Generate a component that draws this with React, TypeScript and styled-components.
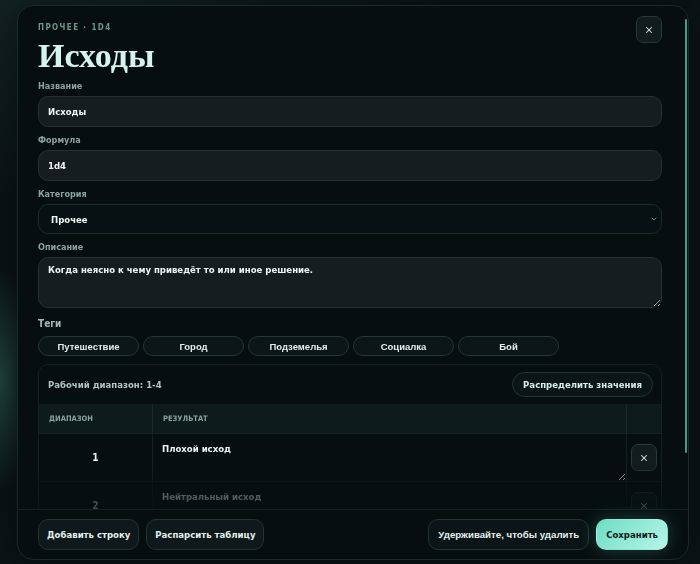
import styled, { createGlobalStyle } from "styled-components";
import { X, ChevronDown } from "lucide-react";

const GlobalStyle = createGlobalStyle`
  * { box-sizing: border-box; }
  body {
    margin: 0;
    background: #0b1315;
    font-family: "DejaVu Sans Condensed", "DejaVu Sans", sans-serif;
  }
`;

const Page = styled.div`
  width: 700px;
  height: 564px;
  padding: 5px 11px 4px 17px;
  background:
    radial-gradient(ellipse 40px 110px at 0px 380px, rgba(52, 110, 96, 0.55), transparent),
    radial-gradient(ellipse 400px 200px at 60px 0px, rgba(30, 52, 50, 0.5), transparent),
    #0b1416;
  overflow: hidden;
`;

const Modal = styled.div`
  height: 555px;
  display: flex;
  flex-direction: column;
  border: 1px solid #1a2a29;
  border-radius: 16px;
  background: #060e10;
  box-shadow: 0 0 40px rgba(0, 0, 0, 0.5);
  overflow: hidden;
`;

const ScrollArea = styled.div`
  position: relative;
  flex: 1;
  overflow: hidden;
  padding: 10px 26px 0 20px;
  -webkit-mask-image: linear-gradient(to bottom, #000 calc(100% - 44px), rgba(0,0,0,0.45) 100%);
  mask-image: linear-gradient(to bottom, #000 calc(100% - 44px), rgba(0,0,0,0.45) 100%);
`;

const ScrollThumb = styled.div`
  position: absolute;
  top: 13px;
  right: 1px;
  width: 2px;
  height: 434px;
  border-radius: 2px;
  background: #3f9d88;
`;

const Header = styled.div`
  display: flex;
  justify-content: space-between;
  align-items: flex-start;
`;

const Eyebrow = styled.div`
  margin-top: 7px;
  font-size: 8px;
  line-height: 10px;
  font-weight: 700;
  letter-spacing: 1.4px;
  color: #6f968d;
`;

const Title = styled.h1`
  margin: 3px 0 0;
  font-family: "Liberation Serif", "DejaVu Serif", serif;
  font-weight: 700;
  font-size: 34px;
  line-height: 40px;
  color: #d6f3ec;
`;

const IconButton = styled.button`
  width: 26px;
  height: 27px;
  display: flex;
  align-items: center;
  justify-content: center;
  padding: 0;
  border-radius: 7px;
  border: 1px solid #25393a;
  background: #121b1d;
  color: #d9ece7;
`;

const Form = styled.div`
  display: flex;
  flex-direction: column;
  gap: 7px;
  margin-top: 4px;
`;

const Field = styled.div<{ $gapTop?: boolean }>`
  display: flex;
  flex-direction: column;
  margin-top: ${(p) => (p.$gapTop ? "3px" : "0")};
`;

const Label = styled.label<{ $big?: boolean }>`
  font-size: ${(p) => (p.$big ? "10px" : "9px")};
  line-height: 12px;
  font-weight: 700;
  color: ${(p) => (p.$big ? "#a5b9b4" : "#8aa49d")};
  margin-bottom: ${(p) => (p.$big ? "6px" : "4px")};
`;

const TextInput = styled.input`
  height: 31px;
  padding: 0 9px;
  border-radius: 10px;
  border: 1px solid #21322f;
  background: #161d1f;
  color: #eef6f3;
  font-family: inherit;
  font-weight: 700;
  font-size: 9.5px;
  outline: none;
`;

const SelectBox = styled.div`
  height: 30px;
  display: flex;
  align-items: center;
  justify-content: space-between;
  padding: 0 3px 0 12px;
  border-radius: 10px;
  border: 1px solid #1b2c2a;
  background: #071012;
  color: #eef6f3;
  font-weight: 700;
  font-size: 9.5px;
`;

const TextArea = styled.textarea`
  height: 51px;
  padding: 6px 9px;
  border-radius: 10px;
  border: 1px solid #21322f;
  background: #161d1f;
  color: #eef6f3;
  font-family: inherit;
  font-weight: 700;
  font-size: 9.5px;
  outline: none;
  resize: vertical;
`;

const Tags = styled.div`
  display: flex;
  gap: 4px;
`;

const Tag = styled.button`
  width: 101px;
  height: 20px;
  padding: 0;
  border-radius: 10px;
  border: 1px solid #213834;
  background: #0c1618;
  color: #e4eeeb;
  font-family: "Liberation Sans", Arial, sans-serif;
  font-weight: 700;
  font-size: 9.5px;
`;

const TablePanel = styled.div`
  margin-top: 1px;
  border: 1px solid #13221f;
  border-radius: 10px;
  overflow: hidden;
`;

const PanelHead = styled.div`
  height: 39px;
  display: flex;
  align-items: center;
  justify-content: space-between;
  padding: 0 8px 0 9px;
`;

const PanelTitle = styled.div`
  font-size: 9.5px;
  font-weight: 700;
  color: #b0c5bf;
`;

const PillButton = styled.button`
  height: 25px;
  padding: 0 10px;
  border-radius: 13px;
  border: 1px solid #223734;
  background: #0b1517;
  color: #d6eee8;
  font-family: inherit;
  font-weight: 700;
  font-size: 9.5px;
`;

const Grid = styled.div`
  display: grid;
  grid-template-columns: 114px 1fr 34px;
`;

const HeadCell = styled.div<{ $last?: boolean }>`
  height: 29px;
  display: flex;
  align-items: center;
  padding-left: 10px;
  background: #0e1b1b;
  border-right: ${(p) => (p.$last ? "none" : "1px solid #1a2b29")};
  font-size: 7.5px;
  font-weight: 700;
  color: #8aa49d;
  text-transform: uppercase;
`;

const Cell = styled.div<{ $faded?: boolean; $last?: boolean }>`
  height: 48px;
  display: flex;
  align-items: center;
  justify-content: center;
  border-top: 1px solid #13221f;
  border-right: ${(p) => (p.$last ? "none" : "1px solid #13221f")};
  opacity: ${(p) => (p.$faded ? 0.55 : 1)};
`;

const RangeCell = styled(Cell)`
  color: #eef6f3;
  font-size: 10px;
  font-weight: 700;
`;

const ResultCell = styled(Cell)`
  align-items: stretch;
  justify-content: stretch;
  padding: 2px 0 0;
`;

const CellText = styled.textarea`
  flex: 1;
  padding: 7px 9px 0;
  border: none;
  background: transparent;
  color: #eef6f3;
  font-family: inherit;
  font-weight: 700;
  font-size: 9.5px;
  outline: none;
  resize: vertical;
`;

const Footer = styled.div`
  display: flex;
  align-items: center;
  gap: 7px;
  height: 50px;
  padding: 0 20px 0 20px;
  border-top: 1px solid #13221f;
`;

const Spacer = styled.div`
  flex: 1;
`;

const FooterButton = styled.button<{ $variant?: "ghost" | "danger" | "primary" }>`
  height: 31px;
  padding: 0 ${(p) => (p.$variant === "ghost" || !p.$variant ? "8px" : "9px")};
  border-radius: 10px;
  border: 1px solid ${(p) => (p.$variant === "primary" ? "transparent" : "#223533")};
  background: ${(p) =>
    p.$variant === "primary"
      ? "linear-gradient(135deg, #6fdcc4, #b6f6e8)"
      : p.$variant === "danger"
      ? "#0b1416"
      : "#0f181a"};
  color: ${(p) => (p.$variant === "primary" ? "#0c1c19" : "#e3efec")};
  box-shadow: ${(p) => (p.$variant === "primary" ? "0 0 18px rgba(110, 220, 196, 0.25)" : "none")};
  font-family: ${(p) =>
    p.$variant === "danger" ? `"Liberation Sans", Arial, sans-serif` : "inherit"};
  font-weight: 700;
  font-size: ${(p) => (p.$variant === "danger" ? "9.7px" : "9.5px")};
`;

const tags = ["Путешествие", "Город", "Подземелья", "Социалка", "Бой"];
const rows = [
  { range: "1", text: "Плохой исход" },
  { range: "2", text: "Нейтральный исход" },
];

const App = () => {
  return (
    <Page>
      <GlobalStyle />
      <Modal>
        <ScrollArea>
          <Header>
            <div>
              <Eyebrow>ПРОЧЕЕ · 1D4</Eyebrow>
              <Title>Исходы</Title>
            </div>
            <IconButton>
              <X size={10} strokeWidth={2.5} />
            </IconButton>
          </Header>
          <Form>
            <Field>
              <Label>Название</Label>
              <TextInput defaultValue="Исходы" />
            </Field>
            <Field>
              <Label>Формула</Label>
              <TextInput defaultValue="1d4" />
            </Field>
            <Field>
              <Label>Категория</Label>
              <SelectBox>
                <span>Прочее</span>
                <ChevronDown size={8} color="#8aa49d" strokeWidth={2.5} />
              </SelectBox>
            </Field>
            <Field>
              <Label>Описание</Label>
              <TextArea defaultValue="Когда неясно к чему приведёт то или иное решение." />
            </Field>
            <Field $gapTop>
              <Label $big>Теги</Label>
              <Tags>
                {tags.map((t) => (
                  <Tag key={t}>{t}</Tag>
                ))}
              </Tags>
            </Field>
            <TablePanel>
              <PanelHead>
                <PanelTitle>Рабочий диапазон: 1-4</PanelTitle>
                <PillButton>Распределить значения</PillButton>
              </PanelHead>
              <Grid>
                <HeadCell>Диапазон</HeadCell>
                <HeadCell>Результат</HeadCell>
                <HeadCell $last />
                {rows.map((r, i) => [
                  <RangeCell key={r.range + "a"} $faded={i > 0}>
                    {r.range}
                  </RangeCell>,
                  <ResultCell key={r.range + "b"} $faded={i > 0}>
                    <CellText defaultValue={r.text} />
                  </ResultCell>,
                  <Cell key={r.range + "c"} $last $faded={i > 0}>
                    <IconButton>
                      <X size={10} strokeWidth={2.5} />
                    </IconButton>
                  </Cell>,
                ])}
              </Grid>
            </TablePanel>
          </Form>
          <ScrollThumb />
        </ScrollArea>
        <Footer>
          <FooterButton>Добавить строку</FooterButton>
          <FooterButton>Распарсить таблицу</FooterButton>
          <Spacer />
          <FooterButton $variant="danger">Удерживайте, чтобы удалить</FooterButton>
          <FooterButton $variant="primary">Сохранить</FooterButton>
        </Footer>
      </Modal>
    </Page>
  );
};

export default App;
